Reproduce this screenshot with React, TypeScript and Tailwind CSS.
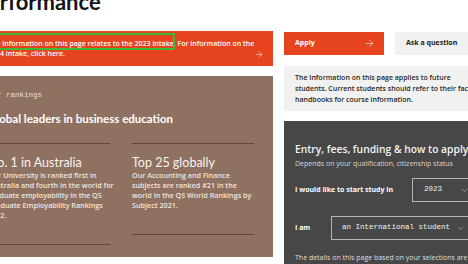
import { ArrowRight, ChevronDown } from 'lucide-react'

const mono = "font-['Liberation_Mono',monospace]"
const sans = "font-['Open_Sans',sans-serif]"

function RankCard({ title, lines }: { title: string; lines: string[] }) {
  return (
    <div className="border-t border-[#5e483c]">
      <h3 className="mt-[11px] text-[12.5px] leading-[15px] text-[#f8f3ef]">{title}</h3>
      <div className={`${sans} text-[7.2px] font-semibold text-[#efe5de] whitespace-nowrap`}>
        {lines.map((l, i) => (
          <p key={i} className="h-[10px] leading-[10px]">{l}</p>
        ))}
      </div>
      <div className="mt-[24px] border-t border-[#5e483c]" />
    </div>
  )
}

function FakeSelect({ value, className }: { value: string; className: string }) {
  return (
    <div className={`flex items-center justify-between h-[24px] border border-[#b4b4b4] text-[#f2f2f2] ${className}`}>
      <span className={`${mono} text-[7.5px]`}>{value}</span>
      <ChevronDown size={9} strokeWidth={1.5} className="text-[#cfcfcf]" />
    </div>
  )
}

export default function App() {
  return (
    <div className="w-[468px] h-[264px] overflow-hidden bg-white font-['Lato',sans-serif]">
      <div className="-ml-[31px]">
        <div className="flex h-[31px]">
          <h1 className="-mt-[9px] ml-[6px] text-[22px] leading-[22px] font-bold text-[#151515]">Performance</h1>
        </div>

        <div className="flex gap-[11px]">
          {/* left column */}
          <div className="w-[304px] shrink-0">
            <div className="relative flex items-end justify-between bg-[#e5441f] pl-[19px] pr-[9px] pt-[8px] pb-[6.5px]">
              <p className={`${sans} text-[7px] leading-[10px] font-semibold text-white whitespace-nowrap`}>
                The information on this page relates to the 2023 intake. For information on the
                <br />
                2024 intake, click here.
              </p>
              <ArrowRight size={11} strokeWidth={1.25} className="text-white mb-[-1px]" />
              <div className="absolute left-[8px] top-[1.5px] w-[198px] h-[17px] border-2 border-[#3dba36] rounded-[1px]" />
            </div>

            <div className="mt-[10.5px] bg-[#8f7161] px-[19px] pt-[14px] pb-[12px]">
              <p className={`${mono} text-[7.5px] leading-[10px] text-[#eadfd8]`}>Our rankings</p>
              <h2 className="mt-[12px] text-[11.5px] leading-[14px] font-bold text-white whitespace-nowrap">
                Global leaders in business education
              </h2>
              <div className="mt-[17px] grid grid-cols-2 gap-[22px] items-start">
                <RankCard
                  title="No. 1 in Australia"
                  lines={[
                    'Our University is ranked first in',
                    'Australia and fourth in the world for',
                    'graduate employability in the QS',
                    'Graduate Employability Rankings',
                    '2022.',
                  ]}
                />
                <RankCard
                  title="Top 25 globally"
                  lines={[
                    'Our Accounting and Finance',
                    'subjects are ranked #21 in the',
                    'world in the QS World Rankings by',
                    'Subject 2021.',
                  ]}
                />
              </div>
            </div>
          </div>

          {/* right column */}
          <div className="w-[200px] shrink-0 pt-[1px]">
            <div className="flex gap-[11px]">
              <button className={`${sans} flex items-center justify-between w-[100px] h-[23px] bg-[#e5441f] pl-[11px] pr-[9px] text-[7px] font-bold text-white`}>
                Apply
                <ArrowRight size={11} strokeWidth={1.25} />
              </button>
              <button className={`${sans} w-[85px] h-[23px] bg-[#f1f1f1] pl-[11px] text-left text-[7px] font-bold text-[#222]`}>
                Ask a question
              </button>
            </div>

            <div className="mt-[11px] bg-[#f1f1f1] px-[11px] pt-[5.5px] pb-[6.5px]">
              <p className={`${sans} text-[7px] leading-[11px] font-semibold text-[#262626] whitespace-nowrap`}>
                The Information on this page applies to future
                <br />
                students. Current students should refer to their faculty
                <br />
                handbooks for course information.
              </p>
            </div>

            <div className="mt-[10px] bg-[#474747] h-[200px] pl-[11px] pt-[21px]">
              <h2 className={`${sans} text-[10.3px] leading-[14px] font-semibold text-[#f3f3f3] whitespace-nowrap`}>
                Entry, fees, funding &amp; how to apply
              </h2>
              <p className={`${sans} mt-[3px] text-[7px] leading-[10px] text-[#d6d6d6] whitespace-nowrap`}>
                Depends on your qualification, citizenship status
              </p>
              <div className="mt-[9px] flex items-center">
                <span className={`${sans} w-[117px] shrink-0 text-[7px] font-bold text-white`}>I would like to start study in</span>
                <FakeSelect value="2023" className="w-[62px] pl-[11px] pr-[4px]" />
              </div>
              <div className="mt-[14px] flex items-center">
                <span className={`${sans} w-[36px] shrink-0 text-[7px] font-bold text-white`}>I am</span>
                <FakeSelect value="an International student" className="w-[141px] pl-[10px] pr-[6px]" />
              </div>
              <p className={`${sans} mt-[13px] text-[7px] leading-[10px] text-[#dedede] whitespace-nowrap`}>
                The details on this page based on your selections are shown below
              </p>
            </div>
          </div>
        </div>
      </div>
    </div>
  )
}
